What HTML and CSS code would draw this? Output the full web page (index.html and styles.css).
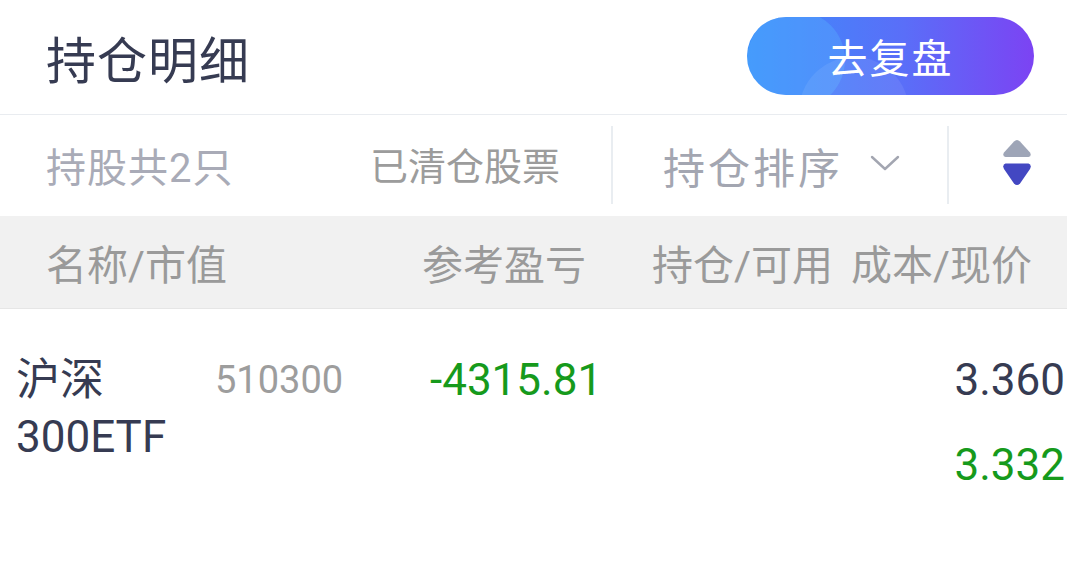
FILE: index.html
```html
<!DOCTYPE html>
<html lang="zh-CN">
<head>
    <meta charset="UTF-8">
    <meta name="viewport" content="width=device-width, initial-scale=1.0">
    <title>持仓明细</title>
    <link rel="stylesheet" href="styles.css">
</head>
<body>
    <div class="header">
        <h2 class="title">持仓明细</h2>
        <a class="review-btn" href="#"><span>去复盘</span></a>
    </div>

    <div class="filter-bar">
        <div class="filter-left">
            <span class="count">持股共2只</span>
            <span class="cleared">已清仓股票</span>
        </div>
        <div class="divider"></div>
        <div class="sort">
            <span class="sort-label">持仓排序</span>
            <svg class="chevron" width="30" height="18" viewBox="0 0 30 18">
                <path d="M2 3 L15 15 L28 3" fill="none" stroke="#a3a6b1" stroke-width="2.4" stroke-linecap="round" stroke-linejoin="round"/>
            </svg>
        </div>
        <div class="divider"></div>
        <div class="order">
            <svg width="32" height="48" viewBox="0 0 32 48">
                <path d="M16 1 Q17.5 1 19 2.6 L29 13.5 Q31 17 27.5 18 L4.5 18 Q1 17 3 13.5 L13 2.6 Q14.5 1 16 1 Z" fill="#9ea5b7"/>
                <path d="M16 46 Q17.5 46 19 44.4 L29 30 Q31 25.5 27.5 24.5 L4.5 24.5 Q1 25.5 3 30 L13 44.4 Q14.5 46 16 46 Z" fill="#4347c2"/>
            </svg>
        </div>
    </div>

    <div class="table-head">
        <span class="col-name">名称/市值</span>
        <span class="col-pnl">参考盈亏</span>
        <span class="col-hold">持仓/可用</span>
        <span class="col-price">成本/现价</span>
    </div>

    <div class="stock-row">
        <div class="stock-name">沪深<br>300ETF</div>
        <div class="stock-code">510300</div>
        <div class="stock-pnl down">-4315.81</div>
        <div class="stock-hold"></div>
        <div class="stock-price">
            <div class="cost">3.360</div>
            <div class="now down">3.332</div>
        </div>
    </div>
</body>
</html>
```

FILE: styles.css
```css
body {
    margin: 0;
    padding: 0;
    background: #fff;
    font-family: Roboto, "Noto Sans CJK SC", sans-serif;
    width: 1067px;
    height: 578px;
    overflow: hidden;
}

/* top bar */
.header {
    height: 114px;
    display: flex;
    align-items: center;
    justify-content: space-between;
    padding: 0 33px 0 46px;
    border-bottom: 1px solid #e9ecf0;
}

.title {
    margin: 0;
    font-size: 50px;
    font-weight: 400;
    color: #363b52;
    letter-spacing: 1px;
}

.review-btn {
    position: relative;
    overflow: hidden;
    width: 287px;
    height: 78px;
    margin-top: -3px;
    border-radius: 39px;
    background: linear-gradient(90deg, #3b8ffb 0%, #5a6ef8 55%, #7c43f3 100%);
    color: #fff;
    font-size: 40px;
    text-decoration: none;
    display: flex;
    align-items: center;
    justify-content: center;
    letter-spacing: 2px;
}

.review-btn span {
    position: relative;
    z-index: 1;
}

.review-btn::before,
.review-btn::after {
    content: "";
    position: absolute;
    border-radius: 50%;
}

.review-btn::before {
    width: 98px;
    height: 98px;
    left: 0;
    top: -6px;
    background: rgba(90, 180, 255, 0.35);
}

.review-btn::after {
    width: 110px;
    height: 110px;
    left: 52px;
    top: 40px;
    background: rgba(255, 255, 255, 0.08);
}

/* filter bar */
.filter-bar {
    height: 100px;
    display: flex;
    align-items: center;
}

.filter-left {
    width: 611px;
    box-sizing: border-box;
    padding: 0 51px 0 46px;
    display: flex;
    justify-content: space-between;
    font-size: 38px;
}

.count {
    color: #a9abb7;
    font-size: 40px;
    letter-spacing: 1px;
}

.cleared {
    color: #9c9c9c;
}

.divider {
    width: 2px;
    height: 78px;
    background: #e9edf1;
}

.sort {
    width: 334px;
    box-sizing: border-box;
    padding-left: 50px;
    display: flex;
    align-items: center;
}

.sort-label {
    font-size: 42px;
    color: #a3a6b1;
    letter-spacing: 3px;
}

.chevron {
    margin-left: 27px;
    margin-top: -4px;
}

.order {
    flex: 1;
    padding-left: 52px;
    display: flex;
    align-items: center;
    margin-top: -5px;
}

/* table header */
.table-head {
    height: 92px;
    background: #f1f1f1;
    border-bottom: 1px solid #e6e6e6;
    display: flex;
    align-items: center;
    font-size: 41px;
    color: #9a9a9a;
    margin-top: 1px;
}

.col-name {
    width: 376px;
    padding-left: 46px;
}

.col-pnl {
    width: 230px;
}

.col-hold {
    width: 199px;
}

/* stock row */
.stock-row {
    display: flex;
    padding-top: 43px;
}

.stock-name {
    width: 199px;
    padding-left: 16px;
    font-size: 44px;
    line-height: 57px;
    color: #363b52;
}

.stock-code {
    width: 215px;
    font-size: 38px;
    line-height: 57px;
    color: #9d9d9d;
}

.stock-pnl {
    width: 260px;
    font-size: 44px;
    line-height: 57px;
}

.stock-hold {
    flex: 1;
}

.stock-price {
    padding-right: 2px;
    text-align: right;
    font-size: 44px;
    line-height: 57px;
}

.cost {
    color: #363b52;
    margin-bottom: 28px;
}

.down {
    color: #169a1c;
}
```
